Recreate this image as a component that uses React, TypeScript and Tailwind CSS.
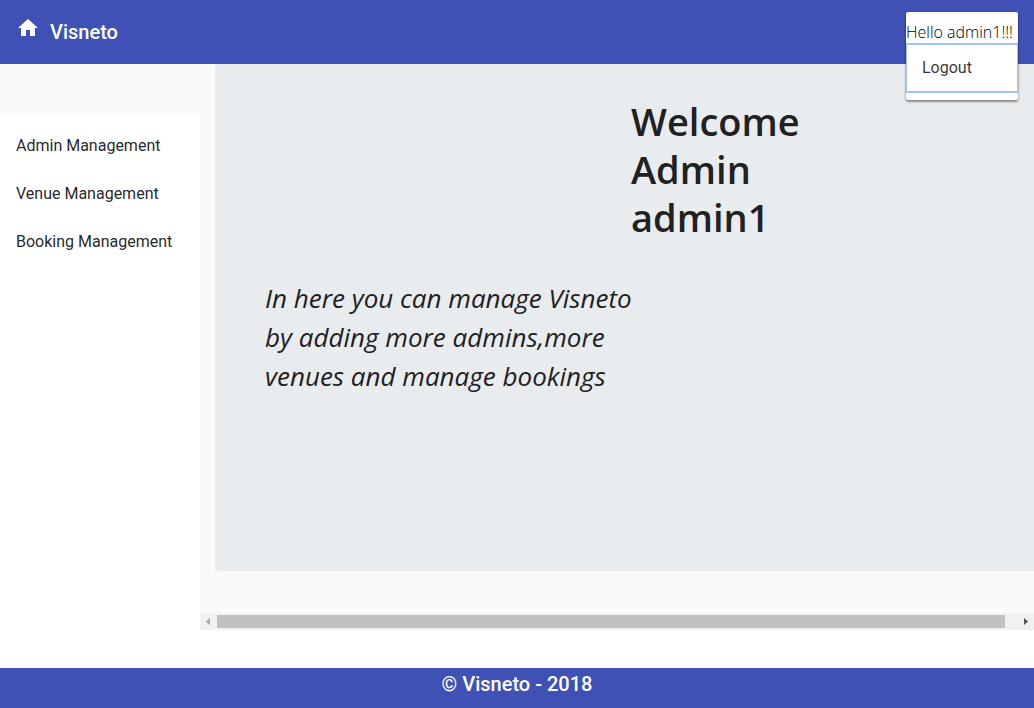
const links = ["Admin Management", "Venue Management", "Booking Management"];

function Header() {
  return (
    <header className="relative flex h-16 items-center bg-[#3f51b5] px-4 text-white">
      <a href="#home" className="flex items-center gap-[10px] text-xl font-medium">
        <svg viewBox="0 0 24 24" className="mb-2 size-6 fill-current" aria-hidden="true">
          <path d="M10 20v-6h4v6h5v-8h3L12 3 2 12h3v8z" />
        </svg>
        Visneto
      </a>
      <div className="absolute top-3 right-4 z-10 w-28 overflow-hidden rounded-xs bg-white py-2 text-base text-black/80 shadow-[0_1px_3px_0_rgba(0,0,0,0.4),0_2px_2px_0_rgba(0,0,0,0.2)]">
        <p className="font-['Open_Sans',sans-serif] font-light whitespace-nowrap text-black">Hello admin1!!!</p>
        <button
          type="button"
          className="block h-12 w-full px-4 text-left outline-2 -outline-offset-1 outline-[#a1c3fa]"
        >
          Logout
        </button>
      </div>
    </header>
  );
}

function Sidebar() {
  return (
    <nav className="flex w-50 shrink-0 flex-col bg-[#fafafa] pt-[50px]">
      <ul className="grow bg-white py-2">
        {links.map((label) => (
          <li key={label}>
            <a href="#manage" className="flex h-12 items-center px-4 text-base text-black/87">
              {label}
            </a>
          </li>
        ))}
      </ul>
    </nav>
  );
}

function ScrollTrack() {
  return (
    <div className="flex h-[17px] items-center bg-[#f1f1f1]">
      <button type="button" aria-label="Scroll left" className="flex h-full w-[17px] items-center pl-[6px]">
        <svg viewBox="0 0 4 7" className="h-[7px] w-1 fill-[#a3a3a3]" aria-hidden="true">
          <path d="M4 0v7L0 3.5z" />
        </svg>
      </button>
      <div className="flex grow">
        <div className="h-[13px] w-[98.5%] bg-[#c1c1c1]" />
      </div>
      <button type="button" aria-label="Scroll right" className="flex h-full w-[17px] items-center justify-center">
        <svg viewBox="0 0 4 7" className="h-[7px] w-1 fill-[#505050]" aria-hidden="true">
          <path d="M0 0v7l4-3.5z" />
        </svg>
      </button>
    </div>
  );
}

export default function App() {
  return (
    <div className="flex min-h-screen flex-col bg-white font-['Roboto',sans-serif]">
      <Header />
      <div className="flex grow">
        <Sidebar />
        <main className="flex min-w-0 grow flex-col pb-[38px]">
          <div className="flex grow flex-col bg-[#fafafa] pb-[42px] pl-[15px]">
            <section className="grid grow grid-cols-[366px_1fr] grid-rows-[auto_1fr] gap-y-[38px] rounded-l-sm bg-[#e9ecef] pt-[33px] pb-8 pl-[50px] font-['Open_Sans',sans-serif] text-[#212121]">
              <h1 className="col-start-2 max-w-48 text-[38px] leading-12 font-semibold">Welcome Admin admin1</h1>
              <p className="-mr-4 text-[26px] leading-[39px] italic">
                In here you can manage Visneto by adding more admins,more venues and manage bookings
              </p>
            </section>
          </div>
          <ScrollTrack />
        </main>
      </div>
      <footer className="h-10 bg-[#3f51b5] text-center text-xl leading-8 font-medium text-white">
        © Visneto - 2018
      </footer>
    </div>
  );
}
